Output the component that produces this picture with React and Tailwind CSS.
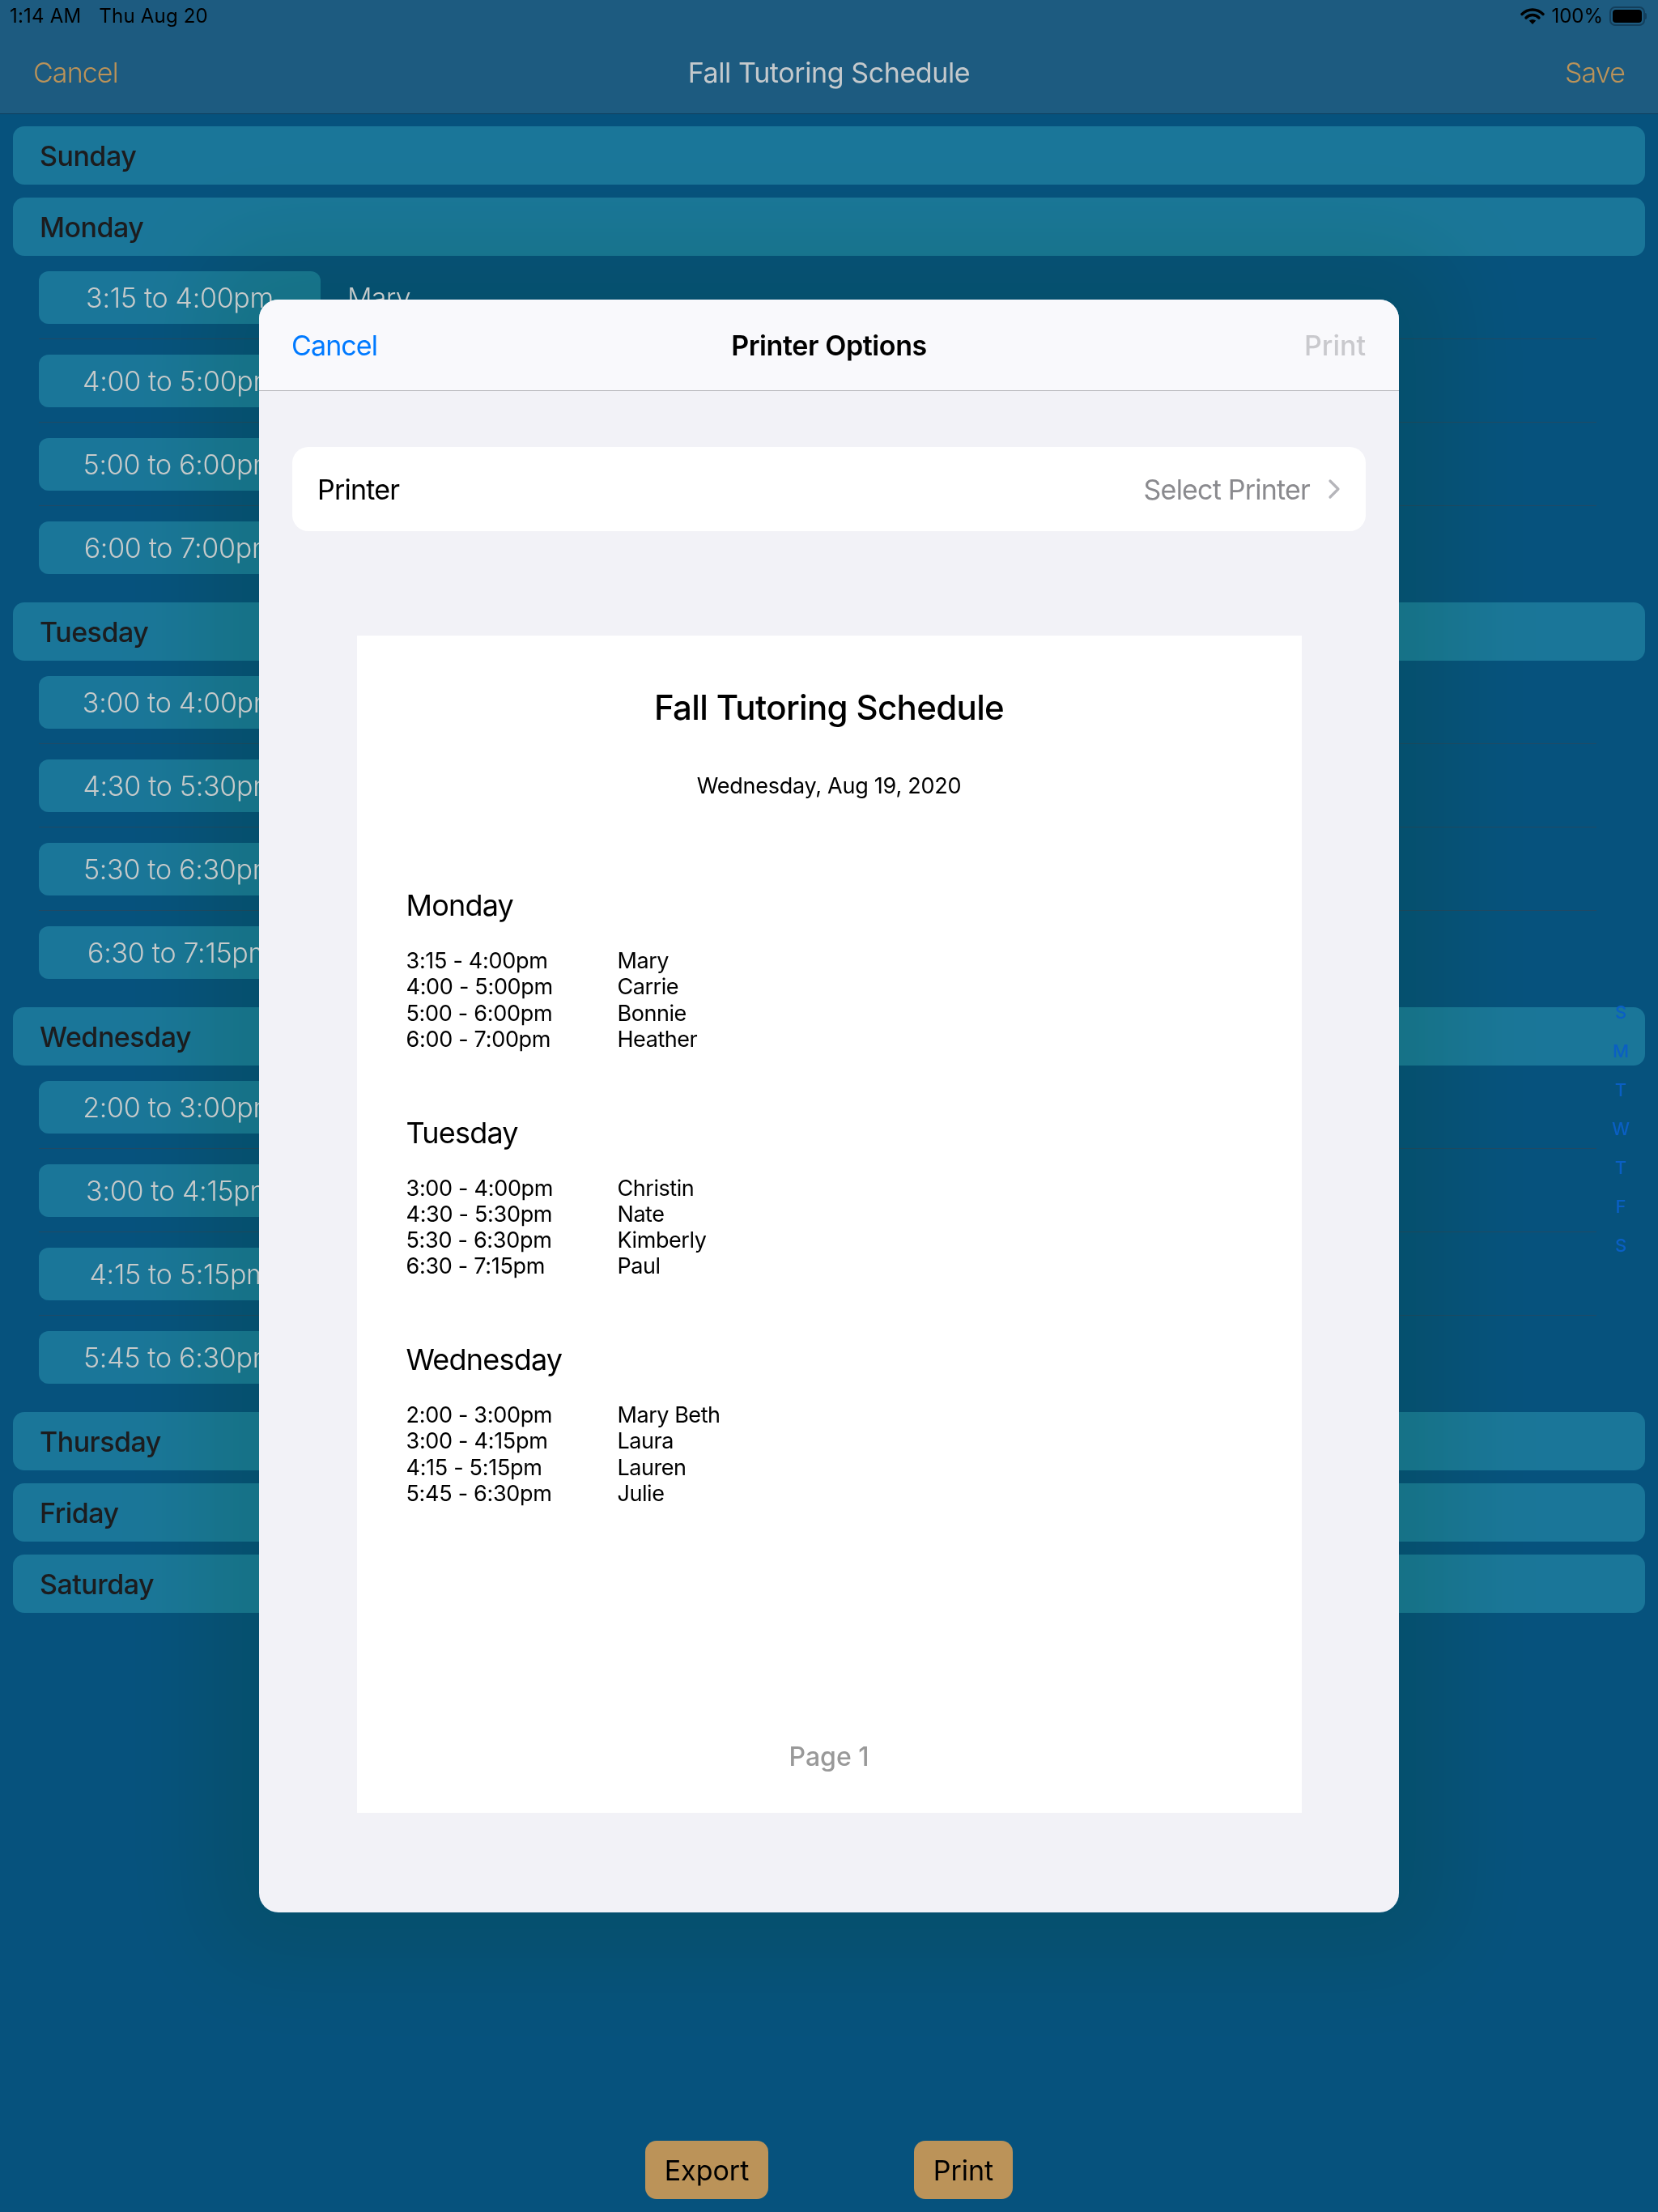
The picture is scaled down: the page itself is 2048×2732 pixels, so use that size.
const DAYS = [
  { name: "Sunday", rows: [] },
  {
    name: "Monday",
    rows: [
      ["3:15 to 4:00pm", "3:15 - 4:00pm", "Mary"],
      ["4:00 to 5:00pm", "4:00 - 5:00pm", "Carrie"],
      ["5:00 to 6:00pm", "5:00 - 6:00pm", "Bonnie"],
      ["6:00 to 7:00pm", "6:00 - 7:00pm", "Heather"],
    ],
  },
  {
    name: "Tuesday",
    rows: [
      ["3:00 to 4:00pm", "3:00 - 4:00pm", "Christin"],
      ["4:30 to 5:30pm", "4:30 - 5:30pm", "Nate"],
      ["5:30 to 6:30pm", "5:30 - 6:30pm", "Kimberly"],
      ["6:30 to 7:15pm", "6:30 - 7:15pm", "Paul"],
    ],
  },
  {
    name: "Wednesday",
    rows: [
      ["2:00 to 3:00pm", "2:00 - 3:00pm", "Mary Beth"],
      ["3:00 to 4:15pm", "3:00 - 4:15pm", "Laura"],
      ["4:15 to 5:15pm", "4:15 - 5:15pm", "Lauren"],
      ["5:45 to 6:30pm", "5:45 - 6:30pm", "Julie"],
    ],
  },
  { name: "Thursday", rows: [] },
  { name: "Friday", rows: [] },
  { name: "Saturday", rows: [] },
];

function Section({ day }) {
  return (
    <div>
      <div className="h-[72px] rounded-[14px] bg-[#1a7699] flex items-center pl-[33px] pt-[1px] text-[34px] font-medium tracking-[-0.5px] text-[#1c1c1e]">
        {day.name}
      </div>
      {day.rows.length > 0 && (
        <div className="pt-[19px] pb-[19px] pl-[32px] pr-[60px]">
          {day.rows.map((r, i) => (
            <div key={r[0]}>
              <div className="flex items-center h-[65px]">
                <div className="w-[348px] h-[65px] rounded-[12px] bg-[#1a7699] flex items-center justify-center text-[34px] font-light tracking-[-0.3px] text-[#c6caca]">
                  <span className="relative z-10">{r[0]}</span>
                </div>
                <div className="relative z-10 ml-[33px] text-[34px] font-light tracking-[-0.8px] text-[#c6caca]">{r[2]}</div>
              </div>
              {i < day.rows.length - 1 && <div className="mt-[18px] mb-[19px] h-px bg-[#1f4a66]" />}
            </div>
          ))}
        </div>
      )}
    </div>
  );
}

function Preview() {
  const printed = DAYS.filter((d) => d.rows.length > 0);
  return (
    <div className="mx-auto mt-[129px] w-[1167px] h-[1454px] bg-white flex flex-col text-black">
      <div className="pt-[61px] text-center text-[42px] leading-[56px] font-[450] tracking-[-0.65px]">Fall Tutoring Schedule</div>
      <div className="mt-[51px] text-center text-[27px] leading-[36px] tracking-[-0.25px]">Wednesday, Aug 19, 2020</div>
      <div className="mt-[106px] pl-[61px]">
        {printed.map((d) => (
          <div key={d.name} className="h-[280.5px]">
            <div className="text-[36px] leading-[46px] tracking-[-0.8px]">{d.name}</div>
            <div className="mt-[30px]">
              {d.rows.map((r) => (
                <div key={r[1]} className="flex text-[27px] leading-[32.3px] font-normal">
                  <div className="w-[261px] tracking-[-0.3px]">{r[1]}</div>
                  <div className="tracking-[-0.45px]">{r[2]}</div>
                </div>
              ))}
            </div>
          </div>
        ))}
      </div>
      <div className="mt-auto pb-[48px] text-center text-[32px] leading-[42px] font-medium text-[#999999]">Page 1</div>
    </div>
  );
}

export default function App() {
  return (
    <div className="relative w-[2048px] h-[2732px] overflow-hidden bg-[#06527d] flex flex-col font-[Inter,sans-serif]">
      <header className="h-[141px] bg-[#1d5b80] border-b border-[#0f3f5e] shrink-0">
        <div className="h-[40px] px-[12px] flex items-center justify-between text-[24px] text-black">
          <div className="flex gap-[22px] tracking-[0.2px]">
            <span>1:14 AM</span>
            <span>Thu Aug 20</span>
          </div>
          <div className="flex items-center gap-[8px] pr-[2px]">
            <svg width="30" height="22" viewBox="0 0 30 22" fill="none">
              <path d="M2 8.5 a18 18 0 0 1 26 0" stroke="#000" strokeWidth="3.4" strokeLinecap="round" />
              <path d="M7 13 a11 11 0 0 1 16 0" stroke="#000" strokeWidth="3.4" strokeLinecap="round" />
              <path d="M10.8 16.6 a6 6 0 0 1 8.4 0 L15 21 Z" fill="#000" />
            </svg>
            <span>100%</span>
            <div className="flex items-center">
              <div className="w-[44px] h-[24px] rounded-[7px] border-2 border-[#133f5c] p-[2px]">
                <div className="w-full h-full rounded-[4px] bg-black" />
              </div>
              <div className="w-[2px] h-[8px] rounded-r-[2px] bg-[#133f5c]" />
            </div>
          </div>
        </div>
        <div className="h-[100px] px-[41px] flex items-center justify-between text-[34px] font-light text-[#bb9359] pb-[1px]">
          <span className="w-[200px] tracking-[-0.9px]">Cancel</span>
          <span className="font-normal tracking-[-0.4px] text-[#c4c9cc]">Fall Tutoring Schedule</span>
          <span className="w-[200px] text-right tracking-[-0.9px]">Save</span>
        </div>
      </header>

      <main className="px-[16px] pt-[15px] flex flex-col gap-[16px]">
        {DAYS.map((d) => (
          <Section key={d.name} day={d} />
        ))}
      </main>

      <div className="mt-auto pb-[16px] flex justify-start pl-[797px] gap-[180px]">
        <div className="w-[152px] h-[72px] rounded-[14px] bg-[#bb9359] flex items-center justify-center text-[34px] text-black">Export</div>
        <div className="w-[122px] h-[72px] rounded-[14px] bg-[#bb9359] flex items-center justify-center text-[34px] text-black">Print</div>
      </div>

      <div className="absolute right-[32px] top-[1226px] w-[28px] flex flex-col items-center text-[22px] leading-[48px] font-medium text-[#0a5fc4]">
        {["S", "M", "T", "W", "T", "F", "S"].map((l, i) => (
          <span key={i}>{l}</span>
        ))}
      </div>

      <div className="absolute left-[320px] top-[370px] w-[1408px] h-[1992px] rounded-[24px] mix-blend-multiply shadow-[0_0_110px_70px_rgb(205,246,222)]" />

      <div className="absolute z-20 left-[320px] top-[370px] w-[1408px] h-[1992px] rounded-[24px] bg-[#f2f2f7]">
        <div className="h-[113px] rounded-t-[24px] bg-[#f9f9fc] border-b border-[#b4b4b9] px-[40px] flex items-center justify-between text-[34px]">
          <span className="w-[200px] text-[#007aff] tracking-[-0.9px]">Cancel</span>
          <span className="font-semibold text-black tracking-[-0.4px]">Printer Options</span>
          <span className="w-[200px] text-right font-medium text-[#c9c9cd] pr-px">Print</span>
        </div>
        <div className="mx-[41px] mt-[69px] h-[104px] rounded-[20px] bg-white flex items-center justify-between px-[31px] text-[34px] tracking-[-0.8px]">
          <span className="text-black">Printer</span>
          <span className="flex items-center gap-[22px] text-[#8a8a8e]">
            Select Printer
            <svg width="16" height="26" viewBox="0 0 16 26" fill="none">
              <path d="M3 3l10 10L3 23" stroke="#b5b5ba" strokeWidth="3.2" strokeLinecap="round" strokeLinejoin="round" />
            </svg>
          </span>
        </div>
        <Preview />
      </div>
    </div>
  );
}
